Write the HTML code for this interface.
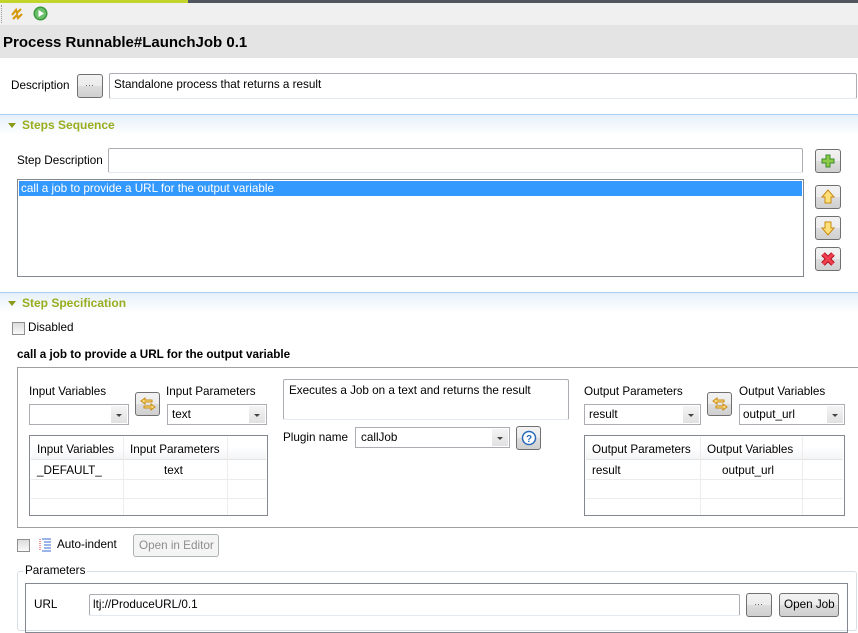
<!DOCTYPE html>
<html><head><meta charset="utf-8"><style>
*{box-sizing:border-box;margin:0;padding:0}
body{width:858px;height:622px;overflow:hidden;background:#fff;font-family:"Liberation Sans",sans-serif;font-size:11.7px;color:#000;position:relative}
.a{position:absolute}
.t{position:absolute;white-space:nowrap;line-height:14px}
.in{position:absolute;border:1px solid #abadb3;border-bottom-color:#e3e9ef;background:#fff;border-radius:2px}
.btn{position:absolute;border:1px solid #707070;border-radius:3px;background:linear-gradient(#f2f2f2,#ebebeb 50%,#dddddd 50%,#cfcfcf);}
.combo{position:absolute;border:1px solid #abadb3;background:#fff}
.combo .dd{position:absolute;right:1px;top:1px;bottom:1px;width:16px;background:linear-gradient(#f4f4f4,#e1e1e1)}
.combo .dd:after{content:"";position:absolute;left:5px;top:8px;border-left:3px solid transparent;border-right:3px solid transparent;border-top:3px solid #444}
.sec{position:absolute;left:0;width:858px;height:21px;border-top:1px solid #a9cff0;background:linear-gradient(#e6f0fa,#fff)}
.sec .tri{position:absolute;left:8px;top:8px;border-left:4px solid transparent;border-right:4px solid transparent;border-top:5px solid #8a9a1a}
.sec span{position:absolute;left:22px;top:3px;font-weight:bold;color:#99ad1f;font-size:12px}
.cb{position:absolute;width:13px;height:13px;border:1px solid #8e8f8f;background:linear-gradient(#dcdcdc,#fafafa)}
.tbl{position:absolute;border:1px solid #828790;background:#fff}
.hl{position:absolute;height:1px;background:#ececec}
.vl{position:absolute;width:1px;background:#ececec}
</style></head><body>
<div class="a" style="left:0;top:0;width:188px;height:3px;background:#c3d52b"></div>
<div class="a" style="left:188px;top:0;width:670px;height:3px;background:#51565e"></div>
<div class="a" style="left:0;top:3px;width:858px;height:22px;background:#f0f0f0"></div>
<div class="a" style="left:1px;top:5px;width:1px;height:18px;border-left:1px dotted #999"></div>
<svg class="a" style="left:9px;top:6px" width="16" height="16" viewBox="0 0 16 16"><path d="M3 9 L7 4 L8 7 L12 3" stroke="#d59a10" stroke-width="2.2" fill="none"/><path d="M4 13 L8 9 L9 12 L13 8" stroke="#d59a10" stroke-width="2.2" fill="none"/></svg>
<svg class="a" style="left:33px;top:6px" width="15" height="15" viewBox="0 0 15 15"><circle cx="7.5" cy="7.5" r="7" fill="#3a9a3a"/><circle cx="7.5" cy="7.5" r="5.5" fill="#6cc06c"/><path d="M5.5 4 L11 7.5 L5.5 11Z" fill="#fff"/></svg>
<div class="a" style="left:0;top:25px;width:858px;height:33px;background:#e4e4e4"></div>
<div class="t" style="left:3px;top:35px;font-size:15px;font-weight:bold;line-height:16px">Process Runnable#LaunchJob 0.1</div>

<div class="t" style="left:11px;top:79px">Description</div>
<div class="btn" style="left:77px;top:74px;width:26px;height:24px"><span class="t" style="left:7px;top:3px;font-size:9px;color:#555">···</span></div>
<div class="in" style="left:109px;top:73px;width:748px;height:26px"><span class="t" style="left:4px;top:4px">Standalone process that returns a result</span></div>

<div class="sec" style="top:114px"><div class="tri"></div><span>Steps Sequence</span></div>
<div class="t" style="left:17px;top:154px">Step Description</div>
<div class="in" style="left:108px;top:148px;width:695px;height:25px"></div>
<div class="a" style="left:17px;top:179px;width:787px;height:98px;border:1px solid #828790"></div>
<div class="a" style="left:19px;top:181px;width:783px;height:15px;background:#3399ff"></div>
<div class="t" style="left:21px;top:182px;color:#fff">call a job to provide a URL for the output variable</div>
<div class="btn" style="left:815px;top:149px;width:26px;height:24px"><svg class="a" style="left:5px;top:4px" width="14" height="14"><path d="M5 1h4v4h4v4h-4v4h-4v-4h-4v-4h4z" fill="#8ccc4a" stroke="#3d8a2a"/></svg></div>
<div class="btn" style="left:815px;top:185px;width:26px;height:24px"><svg class="a" style="left:5px;top:3px" width="14" height="16"><path d="M7 1 L13 8 H10 V14 H4 V8 H1Z" fill="#fde07a" stroke="#c88a10"/></svg></div>
<div class="btn" style="left:815px;top:216px;width:26px;height:24px"><svg class="a" style="left:5px;top:3px" width="14" height="16"><path d="M7 15 L13 8 H10 V2 H4 V8 H1Z" fill="#fde07a" stroke="#c88a10"/></svg></div>
<div class="btn" style="left:815px;top:247px;width:26px;height:24px"><svg class="a" style="left:5px;top:4px" width="14" height="14"><path d="M2 2 L12 12 M12 2 L2 12" stroke="#b01020" stroke-width="5"/><path d="M2 2 L12 12 M12 2 L2 12" stroke="#f04050" stroke-width="3"/></svg></div>

<div class="sec" style="top:292px"><div class="tri"></div><span>Step Specification</span></div>
<div class="cb" style="left:12px;top:322px"></div>
<div class="t" style="left:28px;top:321px">Disabled</div>
<div class="t" style="left:17px;top:348px;font-weight:bold">call a job to provide a URL for the output variable</div>

<div class="a" style="left:17px;top:367px;width:841px;height:161px;border:1px solid #a0a0a0;border-right:none"></div>
<div class="t" style="left:29px;top:385px">Input Variables</div>
<div class="combo" style="left:29px;top:404px;width:100px;height:21px"><div class="dd"></div></div>
<div class="btn" style="left:135px;top:392px;width:25px;height:24px"><svg class="a" style="left:4px;top:4px" width="16" height="14"><path d="M1 4 L5 1 V3 H12 V5 H5 V7Z M15 10 L11 7 V9 H4 V11 H11 V13Z" fill="#fbe08a" stroke="#c88a10"/></svg></div>
<div class="t" style="left:166px;top:385px">Input Parameters</div>
<div class="combo" style="left:167px;top:404px;width:100px;height:21px"><span class="t" style="left:4px;top:3px">text</span><div class="dd"></div></div>
<div class="tbl" style="left:29px;top:435px;width:239px;height:81px">
<div class="a" style="left:1px;top:1px;width:235px;height:23px;background:linear-gradient(#fff,#fff 40%,#f3f4f6)"></div>
<div class="hl" style="left:1px;top:23px;width:235px;background:#e3e3e3"></div>
<div class="hl" style="left:1px;top:43px;width:235px"></div>
<div class="hl" style="left:1px;top:62px;width:235px"></div>
<div class="vl" style="left:93px;top:1px;height:78px"></div>
<div class="vl" style="left:197px;top:1px;height:78px"></div>
<span class="t" style="left:7px;top:7px">Input Variables</span>
<span class="t" style="left:100px;top:7px">Input Parameters</span>
<span class="t" style="left:7px;top:28px">_DEFAULT_</span>
<span class="t" style="left:134px;top:28px">text</span>
</div>

<div class="in" style="left:283px;top:379px;width:286px;height:41px"><span class="t" style="left:5px;top:4px">Executes a Job on a text and returns the result</span></div>
<div class="t" style="left:283px;top:431px">Plugin name</div>
<div class="combo" style="left:355px;top:427px;width:155px;height:21px"><span class="t" style="left:5px;top:3px">callJob</span><div class="dd"></div></div>
<div class="btn" style="left:516px;top:426px;width:25px;height:24px"><svg class="a" style="left:4px;top:3px" width="16" height="16"><circle cx="8" cy="8" r="6.5" fill="#fff" stroke="#2a6ab8" stroke-width="1.5"/><text x="5" y="12" font-family="Liberation Sans" font-weight="bold" font-size="10" fill="#2a6ab8">?</text></svg></div>

<div class="t" style="left:584px;top:385px">Output Parameters</div>
<div class="combo" style="left:584px;top:404px;width:117px;height:21px"><span class="t" style="left:4px;top:3px">result</span><div class="dd"></div></div>
<div class="btn" style="left:707px;top:392px;width:25px;height:24px"><svg class="a" style="left:4px;top:4px" width="16" height="14"><path d="M1 4 L5 1 V3 H12 V5 H5 V7Z M15 10 L11 7 V9 H4 V11 H11 V13Z" fill="#fbe08a" stroke="#c88a10"/></svg></div>
<div class="t" style="left:739px;top:385px">Output Variables</div>
<div class="combo" style="left:739px;top:404px;width:106px;height:21px"><span class="t" style="left:3px;top:3px">output_url</span><div class="dd"></div></div>
<div class="tbl" style="left:584px;top:435px;width:261px;height:81px">
<div class="a" style="left:1px;top:1px;width:257px;height:23px;background:linear-gradient(#fff,#fff 40%,#f3f4f6)"></div>
<div class="hl" style="left:1px;top:23px;width:257px;background:#e3e3e3"></div>
<div class="hl" style="left:1px;top:43px;width:257px"></div>
<div class="hl" style="left:1px;top:62px;width:257px"></div>
<div class="vl" style="left:115px;top:1px;height:78px"></div>
<div class="vl" style="left:217px;top:1px;height:78px"></div>
<span class="t" style="left:7px;top:7px">Output Parameters</span>
<span class="t" style="left:122px;top:7px">Output Variables</span>
<span class="t" style="left:7px;top:28px">result</span>
<span class="t" style="left:137px;top:28px">output_url</span>
</div>

<div class="cb" style="left:17px;top:539px"></div>
<svg class="a" style="left:38px;top:537px" width="14" height="16"><path d="M4 2h9M6 5h7M6 8h7M6 11h7M4 14h9" stroke="#3a6ad0" stroke-width="1"/><path d="M2 2v12" stroke="#e03030" stroke-dasharray="1 1"/></svg>
<div class="t" style="left:57px;top:538px">Auto-indent</div>
<div class="a" style="left:133px;top:534px;width:86px;height:23px;border:1px solid #adb2b5;border-radius:3px;background:#f4f4f4"><span class="t" style="left:5px;top:4px;color:#8d8d8d">Open in Editor</span></div>

<div class="a" style="left:17px;top:571px;width:840px;height:60px;border:1px solid #d5dfe5;border-radius:3px"></div>
<div class="t" style="left:23px;top:564px;background:#fff;padding:0 2px">Parameters</div>
<div class="a" style="left:25px;top:583px;width:823px;height:50px;border:1px solid #828790"></div>
<div class="t" style="left:34px;top:598px">URL</div>
<div class="in" style="left:89px;top:594px;width:651px;height:22px"><span class="t" style="left:3px;top:3px">ltj://ProduceURL/0.1</span></div>
<div class="btn" style="left:746px;top:593px;width:26px;height:24px"><span class="t" style="left:7px;top:3px;font-size:9px;color:#555">···</span></div>
<div class="btn" style="left:779px;top:593px;width:60px;height:24px"><span class="t" style="left:4px;top:4px">Open Job</span></div>
</body></html>
